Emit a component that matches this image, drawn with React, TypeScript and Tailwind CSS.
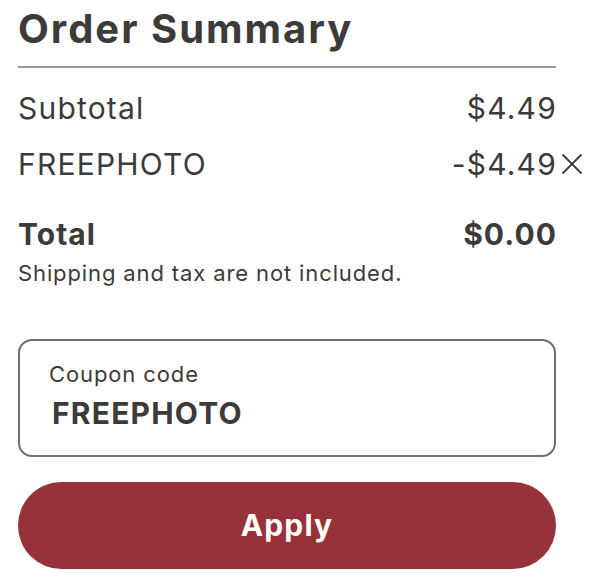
import { useState } from 'react'

const ink = 'text-[#3d3a3a]'

function Row({ label, value, onRemove }: { label: string; value: string; onRemove?: () => void }) {
  return (
    <div className={`flex items-center justify-between text-[30px] leading-[36px] tracking-[0.04em] ${ink}`}>
      <span>{label}</span>
      <span className="relative -mr-[1px]">
        {value}
        {onRemove && (
          <button
            onClick={onRemove}
            aria-label="Remove coupon"
            className="absolute left-full top-1/2 -translate-y-1/2 ml-[4px] flex items-center justify-center"
          >
            <svg width="22" height="22" viewBox="0 0 22 22" fill="none" stroke="#3d3a3a" strokeWidth="1.8" strokeLinecap="round">
              <path d="M2 2 L20 20 M20 2 L2 20" />
            </svg>
          </button>
        )}
      </span>
    </div>
  )
}

export default function App() {
  const [code, setCode] = useState('FREEPHOTO')

  return (
    <div className="min-h-[584px] bg-white px-[18px] pt-[5px]" style={{ fontFamily: 'Inter, "Noto Sans", sans-serif' }}>
      <div className="w-[538px]">
        <h1 className={`text-[40px] leading-[48px] font-bold tracking-[0.05em] ${ink} pb-[13px] border-b-2 border-[#9a9494]`}>
          Order Summary
        </h1>

        <div className="mt-[22px] flex flex-col gap-[20px]">
          <Row label="Subtotal" value="$4.49" />
          <Row label="FREEPHOTO" value="-$4.49" onRemove={() => {}} />
        </div>

        <div className={`mt-[34px] flex items-center justify-between text-[30px] leading-[36px] font-bold tracking-[0.035em] ${ink}`}>
          <span>Total</span>
          <span className="-mr-[1px]">$0.00</span>
        </div>
        <p className={`mt-[7px] text-[22px] leading-[28px] tracking-[0.04em] ${ink}`}>Shipping and tax are not included.</p>

        <label className="mt-[52px] block h-[118px] rounded-[14px] border-2 border-[#6e7070] pl-[29px] pr-4 pt-[20px]">
          <span className={`block text-[22px] leading-[26px] tracking-[0.04em] ${ink}`}>Coupon code</span>
          <input
            value={code}
            onChange={e => setCode(e.target.value)}
            className={`mt-[8px] ml-[3px] w-full bg-transparent outline-none text-[30px] leading-[36px] font-bold tracking-[0.04em] ${ink}`}
          />
        </label>

        <button className="mt-[25px] w-full h-[87px] rounded-full bg-[#97323a] text-white text-[30px] font-bold tracking-[0.04em]">
          Apply
        </button>
      </div>
    </div>
  )
}
